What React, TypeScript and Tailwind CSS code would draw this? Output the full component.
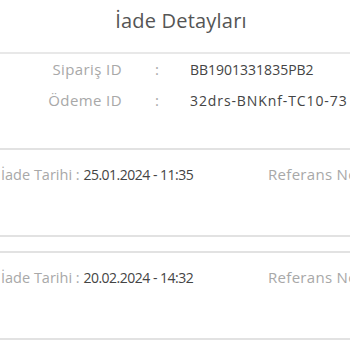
import React from 'react';

type Refund = { date: string };

const refunds: Refund[] = [
  { date: '25.01.2024 - 11:35' },
  { date: '20.02.2024 - 14:32' },
];

const info = [
  { label: 'Sipariş ID', value: 'BB1901331835PB2', spacing: 'tracking-normal' },
  { label: 'Ödeme ID', value: '32drs-BNKnf-TC10-73', spacing: 'tracking-[0.9px]' },
];

export default function App() {
  return (
    <div className="w-[350px] h-[350px] overflow-hidden bg-white font-['Open_Sans',sans-serif]">
      {/* Header */}
      <div className="h-[54px] border-b-2 border-[#e8e8e8] pt-[8px] pl-[12px] text-center">
        <h1 className="text-[20px] leading-[26px] tracking-[0.2px] text-[#555]">İade Detayları</h1>
      </div>

      {/* Order info */}
      <div className="flex flex-col">
        {info.map((row) => (
          <div key={row.label} className="flex h-[31px] items-center whitespace-nowrap">
            <span className="w-[122px] shrink-0 text-right text-[15px] tracking-[0.4px] text-[#a8a8a8]">{row.label}</span>
            <span className="w-[68px] shrink-0 pl-[33px] text-[15px] text-[#a8a8a8]">:</span>
            <span className={`text-[14px] text-[#444] ${row.spacing}`}>{row.value}</span>
          </div>
        ))}
      </div>

      {/* Refund cards */}
      <div className="mt-[32px] flex flex-col gap-[14px]">
        {refunds.map((r) => (
          <div key={r.date} className="h-[89px] border-y-2 border-[#e2e2e2] pt-[14px]">
            <div className="flex items-baseline leading-[20px] whitespace-nowrap">
              <div className="w-[268px] shrink-0 pl-[1px]">
                <span className="text-[14.5px] text-[#a8a8a8]">İade Tarihi : </span>
                <span className="text-[14px] tracking-[-0.5px] text-[#444]">{r.date}</span>
              </div>
              <span className="text-[15px] tracking-[0.3px] text-[#a8a8a8]">Referans No</span>
            </div>
          </div>
        ))}
      </div>
    </div>
  );
}
